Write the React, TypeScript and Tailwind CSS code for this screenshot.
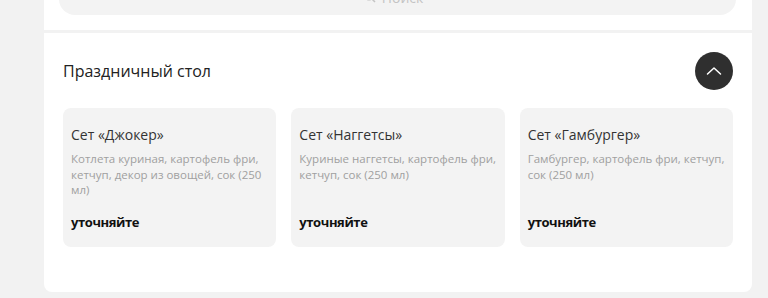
import React from "react";

const items = [
  { title: "Сет «Джокер»", desc: "Котлета куриная, картофель фри, кетчуп, декор из овощей, сок (250 мл)" },
  { title: "Сет «Наггетсы»", desc: "Куриные наггетсы, картофель фри, кетчуп, сок (250 мл)" },
  { title: "Сет «Гамбургер»", desc: "Гамбургер, картофель фри, кетчуп, сок (250 мл)" },
];

export default function App() {
  return (
    <div className="h-[298px] overflow-hidden bg-[#f2f2f2]" style={{ fontFamily: '"Open Sans", sans-serif' }}>
      <div className="ml-[44px] w-[708px]">
        <div className="bg-white pl-[15px] pr-[16px] pb-[15px]">
          <div className="-mt-[21px] h-[36px] rounded-[16px] bg-[#f3f3f3] flex items-center justify-center gap-[6px] pr-[8px] text-[#c4c4c4] text-[14px]">
            <svg width="12" height="12" viewBox="0 0 12 12" fill="none" stroke="#c4c4c4" strokeWidth="1.5">
              <circle cx="5" cy="5" r="3.8" />
              <path d="M8 8l3 3" />
            </svg>
            <span>Поиск</span>
          </div>
        </div>
        <div className="h-[3px] bg-[#f2f2f2]" />
        <div className="bg-white rounded-b-[8px] px-[19px] pt-[19px] pb-[45px]">
          <div className="flex items-center justify-between h-[38px]">
            <div className="text-[16px] text-[#222] leading-[22px]">Праздничный стол</div>
            <button className="w-[38px] h-[38px] rounded-full bg-[#2f2f2f] flex items-center justify-center">
              <svg width="16" height="10" viewBox="0 0 16 10" fill="none" stroke="white" strokeWidth="1.5" strokeLinecap="round" strokeLinejoin="round">
                <path d="M1.5 8L8 2l6.5 6" />
              </svg>
            </button>
          </div>
          <div className="grid grid-cols-3 gap-[15px] mt-[18px]">
            {items.map((it) => (
              <div key={it.title} className="h-[139px] rounded-[8px] bg-[#f3f3f3] px-[8px] pt-[17px] pb-[15px] flex flex-col">
                <div className="text-[14px] leading-[19px] text-[#333]">{it.title}</div>
                <div className="mt-[7px] text-[11.5px] leading-[15.5px] text-[#a0a0a0]">{it.desc}</div>
                <div className="mt-auto text-[13px] leading-[19px] font-bold tracking-[-0.4px] text-[#111]">уточняйте</div>
              </div>
            ))}
          </div>
        </div>
      </div>
    </div>
  );
}
